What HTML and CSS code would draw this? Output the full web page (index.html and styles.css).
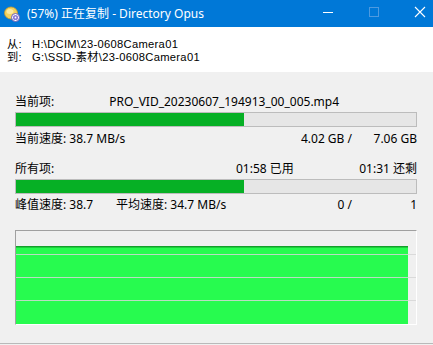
FILE: index.html
```html
<!DOCTYPE html>
<html lang="zh">
<head>
<meta charset="utf-8">
<title>Directory Opus</title>
<link rel="stylesheet" href="styles.css">
</head>
<body>
<div class="window">
  <div class="titlebar">
    <svg class="app-icon" width="16" height="16" viewBox="0 0 16 16">
      <ellipse cx="7" cy="7" rx="6.5" ry="6" fill="#f4d35e" stroke="#c99a2a" stroke-width="0.8"/>
      <ellipse cx="6" cy="5.5" rx="3.5" ry="2.5" fill="#fbeaa0"/>
      <circle cx="11.5" cy="11.5" r="4" fill="#ffffff" stroke="#6b5bb5" stroke-width="1"/>
      <circle cx="11.5" cy="11.5" r="2.6" fill="#8a7ad6"/>
      <circle cx="11.5" cy="11.5" r="0.9" fill="#ffffff"/>
    </svg>
    <span class="title">(57%) 正在复制 - Directory Opus</span>
    <div class="controls">
      <svg class="ctl" width="46" height="27" viewBox="0 0 46 27"><rect x="18" y="12" width="10" height="1" fill="#ffffff"/></svg>
      <svg class="ctl" width="46" height="27" viewBox="0 0 46 27"><rect x="18.5" y="7.5" width="9" height="9" fill="none" stroke="#4d9ae0" stroke-width="1"/></svg>
      <svg class="ctl" width="46" height="27" viewBox="0 0 46 27"><path d="M18 7 L28 17 M28 7 L18 17" stroke="#ffffff" stroke-width="1.1"/></svg>
    </div>
  </div>
  <div class="paths">
    <div class="path-row"><span class="path-label">从:</span><span>H:\DCIM\23-0608Camera01</span></div>
    <div class="path-row"><span class="path-label">到:</span><span>G:\SSD-素材\23-0608Camera01</span></div>
  </div>
  <div class="content">
    <div class="row item-row"><span>当前项:</span><span class="filename">PRO_VID_20230607_194913_00_005.mp4</span></div>
    <div class="bar"><div class="fill" style="width:57%"></div></div>
    <div class="row stats-row"><span class="grow">当前速度: 38.7 MB/s</span><span>4.02 GB /</span><span class="rcol">7.06 GB</span></div>

    <div class="row all-row"><span>所有项:</span><span class="grow">01:58 已用</span><span>01:31 还剩</span></div>
    <div class="bar"><div class="fill" style="width:57%"></div></div>
    <div class="row peak-row"><span class="peak">峰值速度: 38.7</span><span class="grow">平均速度: 34.7 MB/s</span><span>0 /</span><span class="rcol">1</span></div>

    <div class="graph">
      <svg width="400" height="93" viewBox="0 0 400 93">
        <rect x="0" y="15" width="392" height="78" fill="#27fb4f"/>
        <rect x="0" y="15" width="392" height="1.5" fill="#12a02a"/>
        <rect x="0" y="23" width="400" height="1" fill="#d6d6d6" opacity="0.85"/>
        <rect x="0" y="46" width="400" height="1" fill="#d6d6d6" opacity="0.85"/>
        <rect x="0" y="69" width="400" height="1" fill="#d6d6d6" opacity="0.85"/>
      </svg>
    </div>
  </div>
  <div class="bottom-line"></div>
</div>
</body>
</html>
```
FILE: styles.css
```css
html, body {
  margin: 0;
  padding: 0;
}
body {
  width: 433px;
  height: 345px;
  background: #f0f0f0;
  font-family: "Noto Sans", "Noto Sans CJK SC", sans-serif;
  font-size: 12px;
  color: #000;
  overflow: hidden;
}
.window {
  display: flex;
  flex-direction: column;
  height: 345px;
}
.titlebar {
  height: 27px;
  background: #0078d7;
  display: flex;
  align-items: center;
  color: #fff;
}
.app-icon {
  margin-left: 4px;
  margin-top: 1px;
  flex: none;
}
.title {
  margin-left: 7px;
  font-size: 12px;
  line-height: 27px;
  white-space: nowrap;
}
.controls {
  margin-left: auto;
  display: flex;
  margin-right: -10px;
}
.ctl {
  display: block;
}
.paths {
  background: #fff;
  height: 45px;
  padding-top: 11px;
  box-sizing: border-box;
  padding-left: 7px;
}
.path-row {
  display: flex;
  line-height: 13px;
  height: 13px;
  font-family: "Liberation Sans", "Noto Sans CJK SC", sans-serif;
  font-size: 11.2px;
  letter-spacing: 0.3px;
}
.path-label {
  width: 25px;
  flex: none;
}
.content {
  padding: 0 16px 0 15px;
  display: flex;
  flex-direction: column;
}
.row {
  display: flex;
  height: 14px;
  line-height: 14px;
  white-space: nowrap;
}
.grow {
  flex: 1;
}
.rcol {
  width: 65px;
  text-align: right;
}
.item-row {
  margin-top: 23px;
}
.filename {
  margin-left: 55px;
}
.bar {
  margin-top: 3px;
  height: 15px;
  box-sizing: border-box;
  border: 1px solid #bcbcbc;
  background: #e6e6e6;
}
.fill {
  height: 100%;
  background: #06b025;
}
.stats-row {
  margin-top: 5px;
}
.all-row {
  margin-top: 16px;
}
.all-row > span:first-child {
  width: 221px;
}
.peak-row {
  margin-top: 4px;
}
.peak {
  width: 101px;
}
.graph {
  margin-top: 18px;
  width: 402px;
  height: 95px;
  box-sizing: border-box;
  border-top: 1px solid #a0a0a0;
  border-left: 1px solid #a0a0a0;
  border-right: 1px solid #ffffff;
  border-bottom: 1px solid #ffffff;
  background: #f0f0f0;
}
.graph svg {
  display: block;
}
.bottom-line {
  margin-top: auto;
  margin-bottom: 1px;
  height: 1px;
  background: #b9b9b9;
}
```
